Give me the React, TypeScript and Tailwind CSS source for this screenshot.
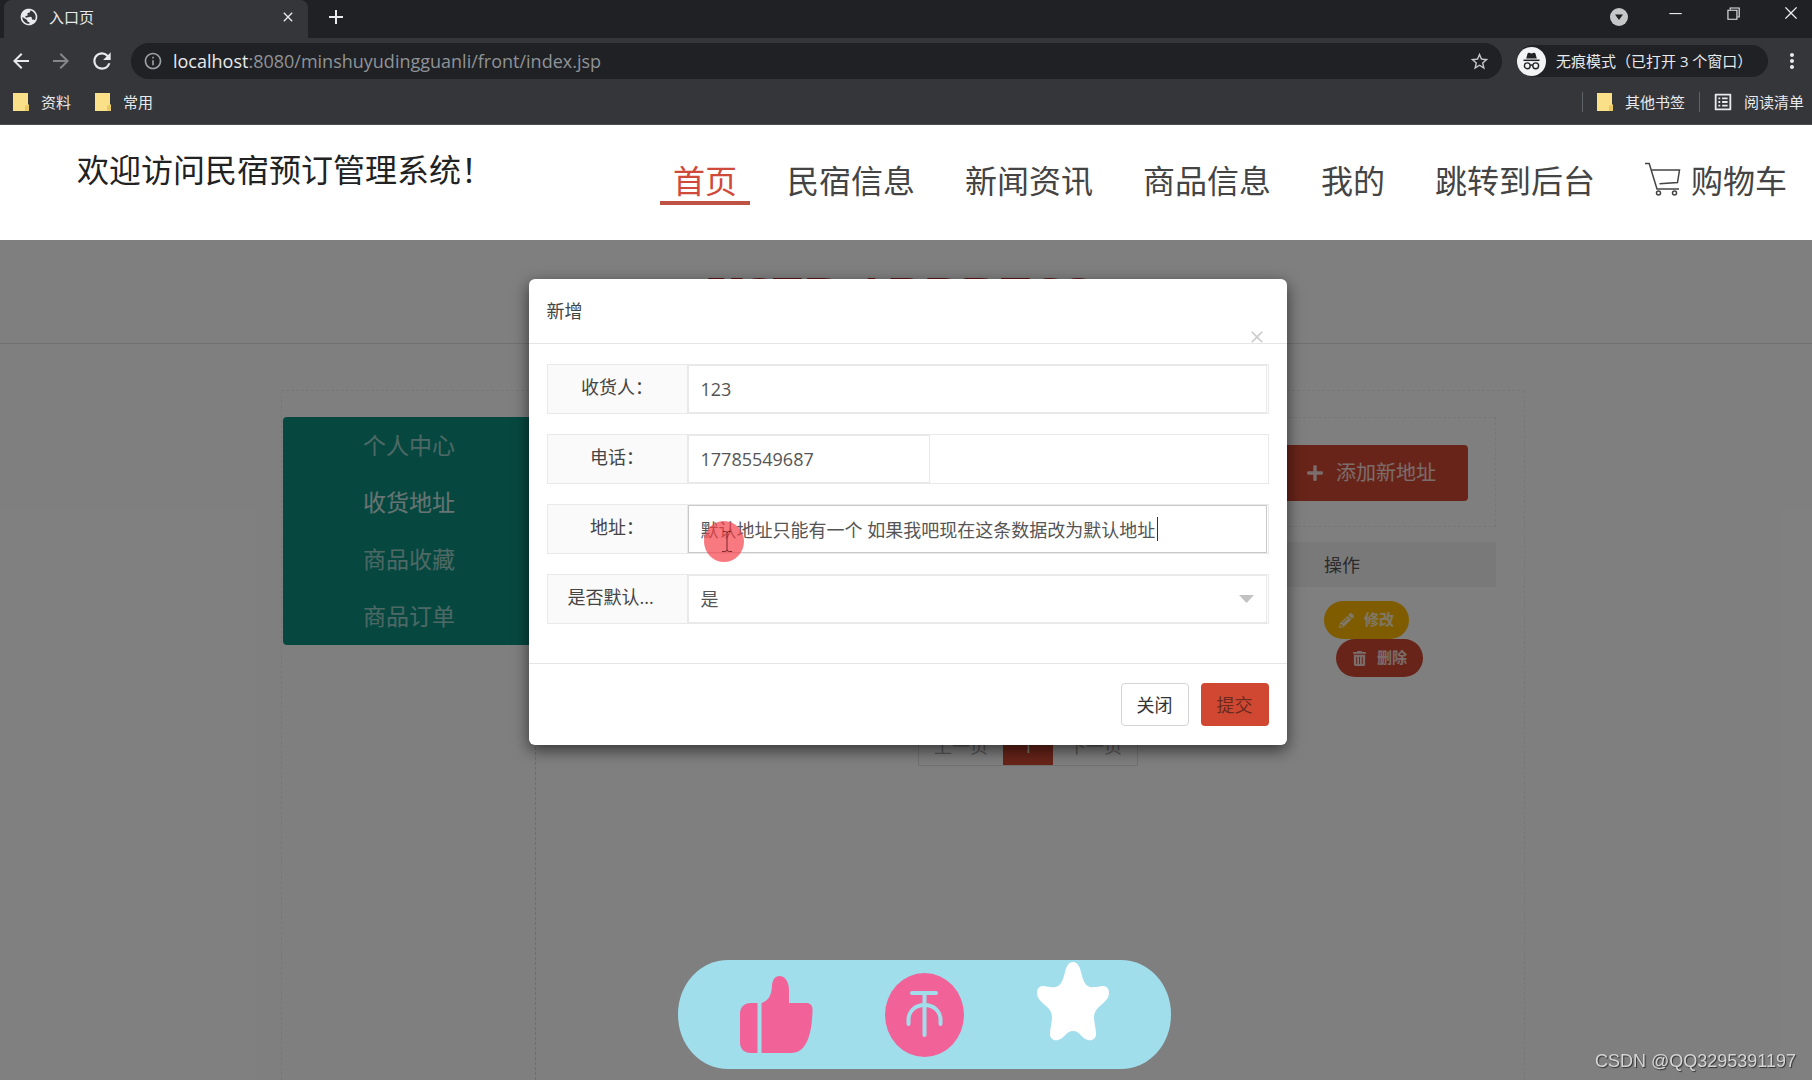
import React, { useState } from 'react';
import {
  MdAdd,
  MdArrowBack,
  MdArrowForward,
  MdClose,
  MdInfoOutline,
  MdMoreVert,
  MdOutlineListAlt,
  MdPublic,
  MdRefresh,
  MdStarBorder,
} from 'react-icons/md';
import { VscChromeClose, VscChromeMinimize, VscChromeRestore } from 'react-icons/vsc';
import { FaPencilAlt, FaPlus, FaTrashAlt } from 'react-icons/fa';

const navItems = ['首页', '民宿信息', '新闻资讯', '商品信息', '我的', '跳转到后台'];
const sideItems = ['个人中心', '收货地址', '商品收藏', '商品订单'];

const FolderIcon = () => (
  <svg width="16" height="20" viewBox="0 0 16 20" aria-hidden="true">
    <path d="M0 1h15v11l1 1v6H0z" fill="#fbe08a" />
    <path d="M12 19v-5l1-1h2l1 1v5z" fill="#e9c964" />
  </svg>
);

const IncognitoIcon = () => (
  <svg width="29" height="29" viewBox="0 0 29 29" aria-hidden="true">
    <circle cx="14.5" cy="14.5" r="14.5" fill="#f1f3f4" />
    <path d="M10.6 6.5c.2-.7.8-1 1.5-.8l2.4.7 2.4-.7c.7-.2 1.3.1 1.5.8l1.4 5H9.2z" fill="#202124" />
    <path d="M6.5 13.3h16" stroke="#202124" strokeWidth="1.5" />
    <g fill="none" stroke="#202124" strokeWidth="1.4">
      <circle cx="10.3" cy="18.8" r="2.9" />
      <circle cx="18.7" cy="18.8" r="2.9" />
      <path d="M13.2 18.5c.8-.6 1.8-.6 2.6 0" />
    </g>
  </svg>
);

const CartIcon = () => (
  <svg width="36" height="34" viewBox="0 0 36 34" fill="none" stroke="currentColor" strokeWidth="1.5" aria-hidden="true">
    <path d="M0 1.5h4.2L12 27h22" />
    <path d="M6.2 8h28.3l-2 12.500-18 1.200" />
    <circle cx="13.5" cy="31" r="2" />
    <circle cx="29.5" cy="31" r="2" />
  </svg>
);

const ThumbIcon = () => (
  <svg width="73" height="78" viewBox="0 0 73 78" fill="#f16298" aria-hidden="true">
    <path d="M11 27h6.5v50H11C4 77 0 73 0 66V38c0-7 4-11 11-11z" />
    <path d="M21.5 27c7-2 10-8 10.500-17 .3-6 3-10 7.500-10C45 0 49 6 49 14v13h17c4.500 0 6.500 2.500 6.500 6.500C72 62 65 77 51 77H21.500z" />
  </svg>
);

const CoinIcon = () => (
  <svg width="79" height="84" viewBox="0 0 79 84" fill="none" aria-hidden="true">
    <ellipse cx="39.5" cy="42" rx="39.5" ry="42" fill="#f16298" />
    <g stroke="#a0deec" strokeWidth="4" strokeLinecap="round">
      <path d="M27 20h24M39.500 20v42" />
      <path d="M23.500 51v-4c0-9 7-15 16-15s16 6 16 15v4" />
    </g>
  </svg>
);

const StarIcon = () => (
  <svg width="72" height="79" viewBox="0 0 72 79" fill="#fff" aria-hidden="true">
    <path d="M36 0c5 0 7 6 8 10 1.5 6 3 13 9 15 5 1 9-1 13-1 4 0 6 3 6 7 0 6-5 9-9 13-4 3-6 7-6 11 0 6 2 11 2 17 0 5-4 7-8 6-6-1-8-9-15-9s-9 8-15 9c-4 1-8-1-8-6 0-6 2-11 2-17 0-4-2-8-6-11-4-4-9-7-9-13 0-4 2-7 6-7 4 0 8 2 13 1 6-2 7.5-9 9-15 1-4 3-10 8-10z" />
  </svg>
);

const BrowserChrome = () => (
  <div className="bg-[#35363a] text-[15px] text-[#e8eaed]">
    <div className="flex h-[38px] bg-[#202124] pl-1">
      <div className="flex h-full w-[304px] items-center rounded-t-lg bg-[#35363a] pb-1 pl-[15px] pr-3">
        <MdPublic size={20} className="-rotate-12" />
        <span className="ml-2.5 flex-1">入口页</span>
        <button type="button" aria-label="关闭标签页"><MdClose size={16} /></button>
      </div>
      <button type="button" aria-label="新标签页" className="ml-4 pb-1"><MdAdd size={24} /></button>
      <div className="ml-auto flex items-center pb-3 pr-3">
        <button type="button" aria-label="搜索标签页" className="mr-[38px] mt-2">
          <svg width="18" height="18" viewBox="0 0 18 18"><circle cx="9" cy="9" r="9" fill="#c6c7c9" /><path d="M5 6.500h8L9 12z" fill="#202124" /></svg>
        </button>
        <button type="button" aria-label="最小化" className="mr-10"><VscChromeMinimize size={18} /></button>
        <button type="button" aria-label="还原" className="mr-10"><VscChromeRestore size={18} /></button>
        <button type="button" aria-label="关闭"><VscChromeClose size={18} /></button>
      </div>
    </div>

    <div className="flex h-[46px] items-center pl-[9px] pr-2">
      <button type="button" aria-label="后退"><MdArrowBack size={24} /></button>
      <button type="button" aria-label="前进" className="ml-4 text-[#85878a]"><MdArrowForward size={24} /></button>
      <button type="button" aria-label="重新加载" className="ml-4"><MdRefresh size={26} /></button>
      <div className="ml-4 flex h-9 flex-1 items-center rounded-full bg-[#202124] px-3">
        <MdInfoOutline size={20} className="text-[#9aa0a6]" />
        <span className="ml-2.5 text-lg text-[#8f9398]">
          <span className="text-[#e8eaed]">localhost</span>:8080/minshuyudingguanli/front/index.jsp
        </span>
        <button type="button" aria-label="添加书签" className="ml-auto text-[#c6c7c9]"><MdStarBorder size={21} /></button>
      </div>
      <div className="ml-[15px] flex h-8 w-[251px] items-center rounded-full bg-[#202124]">
        <IncognitoIcon />
        <span className="ml-2.5 whitespace-nowrap">无痕模式（已打开 3 个窗口）</span>
      </div>
      <button type="button" aria-label="更多" className="ml-3"><MdMoreVert size={24} /></button>
    </div>

    <div className="flex h-[41px] items-center border-b border-[#4a4b4e] pb-1 pl-[13px] pr-2">
      <button type="button" className="flex items-center gap-3"><FolderIcon />资料</button>
      <button type="button" className="ml-6 flex items-center gap-3"><FolderIcon />常用</button>
      <div className="ml-auto flex items-center">
        <span className="h-5 w-px bg-[#5f6368]" />
        <button type="button" className="mx-3.5 flex items-center gap-3"><FolderIcon />其他书签</button>
        <span className="h-5 w-px bg-[#5f6368]" />
        <button type="button" className="ml-3 flex items-center gap-2.5"><MdOutlineListAlt size={22} />阅读清单</button>
      </div>
    </div>
  </div>
);

const SiteHeader = () => (
  <header className="flex h-[115px] justify-between bg-white pl-[77px] pr-3">
    <h1 className="pt-5 text-[32px] leading-[50px] text-[#222]">欢迎访问民宿预订管理系统！</h1>
    <nav className="flex gap-6 pt-[34px] text-[32px] leading-[44px] text-[#444]">
      {navItems.map((item, i) => (
        <a
          key={item}
          href="#"
          className={`h-[46px] whitespace-nowrap px-[13px] ${i === 0 ? 'border-b-4 border-[#bf5343] text-[#cf4a3a]' : ''}`}
        >
          {item}
        </a>
      ))}
      <a href="#" className="flex h-[46px] gap-2.5 whitespace-nowrap px-[13px]">
        <span className="pt-[3px]"><CartIcon /></span>
        购物车
      </a>
    </nav>
  </header>
);

const AddressPage = () => (
  <div className="flex flex-1 flex-col bg-white">
    <div className="h-[104px] border-b border-[#e0e0e0] pr-3.5 pt-[29px]">
      <h2 className="text-center font-['Liberation_Serif',serif] text-[51px] font-bold leading-[51px] text-[#c22a2a] [text-shadow:1px_1px_1px_#555]">
        USER ADDRESS
      </h2>
    </div>

    <div className="flex flex-1 pr-1.5 pt-[46px]">
      <div className="mx-auto flex w-full max-w-[1244px] border border-b-0 border-dashed border-[#eee] pl-px pt-[26px]">
        <aside className="w-[253px] shrink-0 border-r border-dashed border-[#ddd]">
          <ul className="rounded-sm bg-[#0c9080] text-center text-[23px] leading-[57px] text-white/60">
            {sideItems.map((item) => (
              <li key={item}>
                <a href="#" className={`block h-[57px] ${item === '收货地址' ? 'text-white/80' : ''}`}>{item}</a>
              </li>
            ))}
          </ul>
        </aside>

        <section className="flex flex-1 flex-col pl-6 pr-7">
          <div className="flex h-[110px] justify-end border border-dashed border-[#eee] pr-[27px] pt-[27px]">
            <button type="button" className="flex h-14 items-center gap-3 rounded-sm bg-[#d14832] px-8 text-xl text-white/80">
              <FaPlus size={18} />
              添加新地址
            </button>
          </div>

          <table className="mt-[15px] w-full text-left text-lg text-[#555]">
            <thead>
              <tr className="h-[45px] bg-[#f2f2f2]">
                <td />
                <th className="w-[192px] px-5 font-normal">操作</th>
              </tr>
            </thead>
            <tbody>
              <tr>
                <td />
                <td className="px-5 py-3.5">
                  <div className="flex flex-col items-start text-[15px] font-bold text-white/80">
                    <button type="button" className="flex h-[38px] items-center gap-2.5 rounded-full bg-[#ffb800] px-[15px]">
                      <FaPencilAlt size={15} />
                      修改
                    </button>
                    <button type="button" className="ml-3 flex h-[38px] items-center gap-2.5 rounded-full bg-[#d14832] px-4">
                      <FaTrashAlt size={15} />
                      删除
                    </button>
                  </div>
                </td>
              </tr>
            </tbody>
          </table>

          <div className="mx-auto mt-9 flex h-[39px] border border-[#e2e2e2] text-lg leading-[37px] text-[#aaa]">
            <button type="button" className="w-[84px]">上一页</button>
            <button type="button" className="w-[50px] bg-[#d14832] text-white">1</button>
            <button type="button" className="w-[84px]">下一页</button>
          </div>
        </section>
      </div>
    </div>
  </div>
);

interface RowProps {
  id: string;
  label: string;
  labelClass?: string;
  children: React.ReactNode;
}

const FormRow: React.FC<RowProps> = ({ id, label, labelClass = 'text-center', children }) => (
  <div className="flex h-[50px] border border-[#e9e9e9]">
    <label htmlFor={id} className={`w-[140px] border-r border-[#e9e9e9] bg-[#fafafa] px-5 leading-[45px] ${labelClass}`}>
      {label}
    </label>
    <div className="relative flex-1 pr-px">{children}</div>
  </div>
);

const inputClass = 'h-full border bg-white px-3 text-[#555] outline-none';

const AddressModal = () => {
  const [name, setName] = useState('123');
  const [phone, setPhone] = useState('17785549687');
  const [address, setAddress] = useState('默认地址只能有一个 如果我吧现在这条数据改为默认地址');

  return (
    <div className="absolute inset-0 bg-black/50 pl-[3px] pt-[39px]">
      <form
        role="dialog"
        aria-label="新增"
        className="mx-auto w-full max-w-[758px] rounded-md bg-white text-lg text-[#444] shadow-[0_5px_16px_rgba(0,0,0,0.6)]"
        onSubmit={(e) => e.preventDefault()}
      >
        <div className="relative h-[65px] border-b border-[#e5e5e5] px-[18px] leading-[64px]">
          <h3>新增</h3>
          <button type="button" aria-label="关闭窗口" className="absolute -bottom-1 right-5 text-[#ccc]">
            <MdClose size={20} />
          </button>
        </div>

        <div className="flex flex-col gap-5 px-[18px] pb-[39px] pt-5">
          <FormRow id="name" label="收货人：">
            <input id="name" value={name} onChange={(e) => setName(e.target.value)} className={`${inputClass} w-full border-[#e9e9e9]`} />
          </FormRow>
          <FormRow id="phone" label="电话：">
            <input id="phone" value={phone} onChange={(e) => setPhone(e.target.value)} className={`${inputClass} w-[242px] border-[#e9e9e9]`} />
          </FormRow>
          <FormRow id="address" label="地址：">
            <input id="address" value={address} onChange={(e) => setAddress(e.target.value)} className={`${inputClass} w-full border-[#c9c9c9]`} />
            <span className="absolute left-[469px] top-3 h-6 w-px bg-[#333]" />
            <svg className="absolute left-4 top-4" width="40" height="41" viewBox="0 0 40 41" aria-hidden="true">
              <ellipse cx="20" cy="20.5" rx="20" ry="20.5" fill="#f5424a" fillOpacity="0.7" />
              <path d="M19 10.500h2.500q1.500 0 1.500 1.500 0-1.500 1.500-1.500H27M23 12v17M18 30.500h2.500q2.500 0 2.500-1.500 0 1.500 2.500 1.500H28" fill="none" stroke="#7a2328" />
            </svg>
          </FormRow>
          <FormRow id="isDefault" label="是否默认..." labelClass="text-left">
            <select id="isDefault" className={`${inputClass} w-full appearance-none border-[#e9e9e9]`}>
              <option>是</option>
              <option>否</option>
            </select>
            <svg className="pointer-events-none absolute right-3.5 top-5" width="15" height="8" viewBox="0 0 15 8" aria-hidden="true">
              <path d="M0 0h15L7.500 8z" fill="#c2c2c2" />
            </svg>
          </FormRow>
        </div>

        <div className="flex justify-end gap-3 border-t border-[#e5e5e5] px-[18px] pb-[19px] pt-[19px]">
          <button type="button" className="h-[43px] w-[68px] rounded-[4px] border border-[#d5d5d5] text-[#333]">关闭</button>
          <button type="submit" className="h-[43px] w-[68px] rounded-[4px] bg-[#d14832] text-[#6b2a20]">提交</button>
        </div>
      </form>
    </div>
  );
};

const App: React.FC = () => {
  return (
    <div className="flex min-h-screen flex-col font-['Open_Sans','Noto_Sans_CJK_SC',sans-serif]">
      <BrowserChrome />
      <SiteHeader />
      <main className="relative flex flex-1 flex-col">
        <AddressPage />
        <AddressModal />
      </main>

      <div className="fixed inset-x-0 bottom-[11px] flex justify-center pl-9">
        <div className="flex h-[109px] w-[493px] items-start justify-between rounded-[50px/54px] bg-[#a0deec] px-[62px]">
          <span className="pt-4"><ThumbIcon /></span>
          <span className="pt-[13px]"><CoinIcon /></span>
          <span className="pt-0.5"><StarIcon /></span>
        </div>
      </div>
      <p className="fixed bottom-2 right-4 font-['Liberation_Sans',sans-serif] text-lg leading-[22px] text-[#d5d5d5] [text-shadow:1px_1px_1px_#333]">
        CSDN @QQ3295391197
      </p>
    </div>
  );
};

export default App;
